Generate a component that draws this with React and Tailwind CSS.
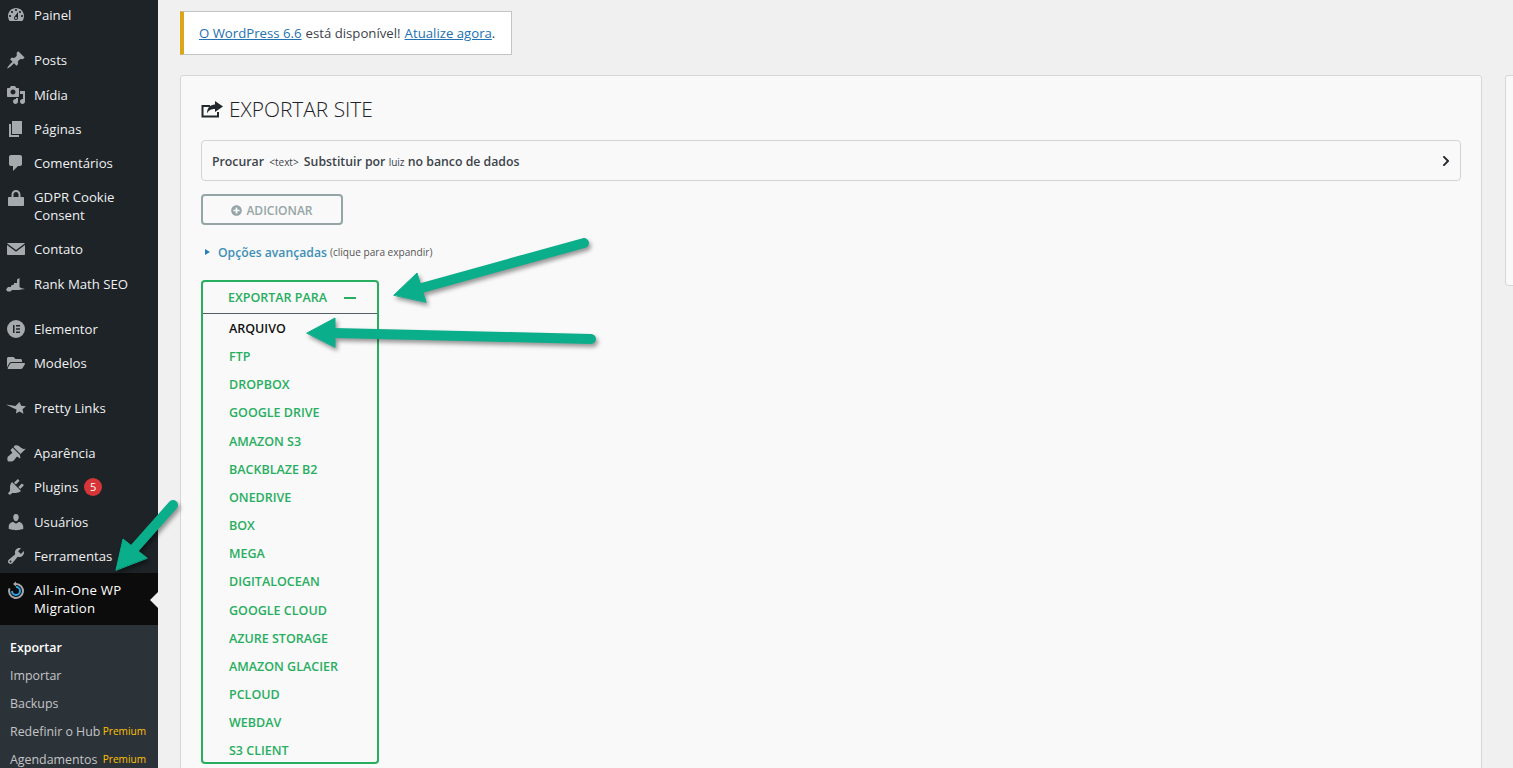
import React from "react";
import { FaFolderOpen, FaPlusCircle, FaChevronRight } from "react-icons/fa";

const Dash = ({ d, evenodd }) => (
  <svg viewBox="0 0 20 20" className="w-5 h-5 fill-[#a7aaad]">
    <path d={d} fillRule={evenodd ? "evenodd" : "nonzero"} />
  </svg>
);

const icons = {
  dashboard: <Dash d="M3.76 16h12.48c1.1-1.37 1.76-3.11 1.76-5 0-4.42-3.58-8-8-8s-8 3.58-8 8c0 1.89.66 3.63 1.76 5zM10 4c.55 0 1 .45 1 1s-.45 1-1 1-1-.45-1-1 .45-1 1-1zM6 6c.55 0 1 .45 1 1s-.45 1-1 1-1-.45-1-1 .45-1 1-1zm8 0c.55 0 1 .45 1 1s-.45 1-1 1-1-.45-1-1 .45-1 1-1zm-5.37 5.55L12 7v6c0 1.1-.9 2-2 2s-2-.9-2-2c0-.57.24-1.08.63-1.45zM4 10c.55 0 1 .45 1 1s-.45 1-1 1-1-.45-1-1 .45-1 1-1zm12 0c.55 0 1 .45 1 1s-.45 1-1 1-1-.45-1-1 .45-1 1-1zm-5 3c0-.55-.45-1-1-1s-1 .45-1 1 .45 1 1 1 1-.45 1-1z" />,
  post: <Dash d="M10.44 3.02l1.82-1.82 6.36 6.35-1.83 1.82c-1.05-.68-2.48-.57-3.41.36l-.75.75c-.92.93-1.04 2.35-.35 3.41l-1.83 1.82-2.41-2.41-2.8 2.79c-.42.42-3.38 2.71-3.8 2.29s1.86-3.39 2.28-3.81l2.79-2.79L4.1 9.36l1.83-1.82c1.05.69 2.48.57 3.4-.36l.75-.75c.93-.92 1.05-2.35.36-3.41z" />,
  media: <Dash d="M13 11V4c0-.55-.45-1-1-1h-1.67L9 1H5L3.67 3H2c-.55 0-1 .45-1 1v7c0 .55.45 1 1 1h10c.55 0 1-.45 1-1zM7 4.5c1.38 0 2.5 1.12 2.5 2.5S8.38 9.5 7 9.5 4.5 8.38 4.5 7 5.62 4.5 7 4.5zM14 6h5v10.5c0 1.38-1.12 2.5-2.5 2.5S14 17.88 14 16.5s1.12-2.5 2.5-2.5c.17 0 .34.02.5.05V9h-3V6zm-4 8.05V13h2v3.5c0 1.38-1.12 2.5-2.5 2.5S7 17.88 7 16.5 8.12 14 9.5 14c.17 0 .34.02.5.05z" />,
  page: <Dash d="M6 15V2h10v13H6zm-1 1h8v2H3V5h2v11z" />,
  comments: <Dash d="M5 2h9c1.1 0 2 .9 2 2v7c0 1.1-.9 2-2 2h-2l-5 5v-5H5c-1.1 0-2-.9-2-2V4c0-1.1.9-2 2-2z" />,
  lock: <Dash d="M14.500 9V6.500C14.500 4 12.500 2 10 2S5.500 4 5.500 6.500V9H3c-.6 0-1 .4-1 1v7c0 .6.4 1 1 1h14c.6 0 1-.4 1-1v-7c0-.6-.4-1-1-1h-2.500zM12.500 9h-5V6.500C7.500 5.100 8.600 4 10 4s2.500 1.100 2.500 2.500V9z" />,
  mail: <Dash d="M2 4h16c.3 0 .6.2.8.4L10 11 1.200 4.400C1.400 4.200 1.700 4 2 4zM1 6l9 6.800L19 6v9c0 .6-.4 1-1 1H2c-.6 0-1-.4-1-1V6z" />,
  rank: <Dash d="M0 15.500l2-2.500h3v-1.500l3-1V9h3V5.500l2.500-1.500v9l1.500 1 4 1-4 .5-2 .5H6l-1.500 1.500h-3z" />,
  elementor: <Dash evenodd d="M10 1a9 9 0 1 0 0 18 9 9 0 0 0 0-18zM7 6h1.500v8H7V6zm3 0h4v1.500h-4V6zm0 3.200h4v1.500h-4V9.200zm0 3.300h4V14h-4v-1.500z" />,
  folder: <FaFolderOpen className="w-[18px] h-[18px] text-[#a7aaad]" />,
  pretty: <Dash d="M0 6.500l9.500 1.500 4-4 1.700 3.800 4.800.5-3.500 3 1 4.500-4-2.300-3.500 2 .5-4L7 10z" />,
  brush: <Dash d="M14.48 11.06L7.41 3.99l1.5-1.5c.5-.56 2.3-.47 3.51.32 1.21.8 1.43 1.28 2.91 2.1 1.18.64 2.45 1.26 4.45.85zm-.71.71L6.7 4.7 4.93 6.47c-.39.39-.39 1.02 0 1.41l1.06 1.06c.39.39.39 1.03 0 1.42-.6.6-1.43 1.11-2.21 1.69-.35.26-.7.53-1.01.84C1.43 13.23.91 15.24 1.76 18.18c2.94.85 4.95.33 6.29-1.01.31-.31.58-.66.84-1.01.58-.78 1.09-1.61 1.69-2.21.39-.39 1.03-.39 1.42 0l1.06 1.06c.39.39 1.02.39 1.41 0z" />,
  plugin: <Dash d="M13.11 4.36L9.87 7.6 8 5.73l3.24-3.24c.35-.34 1.05-.2 1.56.32.52.51.66 1.21.31 1.55zm-8 1.77l.91-1.12 9.01 9.01-1.19.84c-.71.71-2.63 1.16-3.82 1.16H6.14L4.9 17.26c-.59.59-1.54.59-2.12 0-.59-.58-.59-1.53 0-2.12l1.24-1.24v-3.88c0-1.13.4-3.19 1.09-3.89zm7.26 3.97l3.24-3.24c.34-.35 1.04-.21 1.55.31.52.51.66 1.21.31 1.55l-3.24 3.25z" />,
  users: <Dash d="M10 9.25c-2.27 0-2.73-3.44-2.73-3.44C7 4.02 7.82 2 9.97 2c2.16 0 2.98 2.02 2.71 3.81 0 0-.41 3.44-2.68 3.44zm0 2.57L12.72 10c2.39 0 4.52 2.33 4.52 4.53v2.49s-3.65 1.13-7.24 1.13c-3.65 0-7.24-1.13-7.24-1.13v-2.49c0-2.25 1.94-4.48 4.47-4.48z" />,
  tools: <Dash d="M16.68 9.77c-1.34 1.34-3.3 1.67-4.95.99l-5.41 6.52c-.99.99-2.59.99-3.58 0s-.99-2.59 0-3.57l6.52-5.42c-.68-1.65-.35-3.61.99-4.95 1.28-1.28 3.12-1.62 4.72-1.06l-2.89 2.89 2.82 2.82 2.86-2.87c.53 1.58.18 3.39-1.08 4.65zM3.81 16.21c.4.39 1.04.39 1.43 0 .4-.4.4-1.04 0-1.43-.39-.4-1.03-.4-1.43 0-.39.39-.39 1.03 0 1.43z" />,
};

const menu = [
  [{ icon: "dashboard", label: "Painel" }],
  [
    { icon: "post", label: "Posts" },
    { icon: "media", label: "Mídia" },
    { icon: "page", label: "Páginas" },
    { icon: "comments", label: "Comentários" },
    { icon: "lock", label: "GDPR Cookie Consent", tall: true },
    { icon: "mail", label: "Contato" },
    { icon: "rank", label: "Rank Math SEO" },
  ],
  [
    { icon: "elementor", label: "Elementor" },
    { icon: "folder", label: "Modelos" },
  ],
  [{ icon: "pretty", label: "Pretty Links" }],
  [
    { icon: "brush", label: "Aparência" },
    { icon: "plugin", label: "Plugins", badge: 5 },
    { icon: "users", label: "Usuários" },
    { icon: "tools", label: "Ferramentas" },
  ],
];

const submenu = [
  { label: "Exportar", current: true },
  { label: "Importar" },
  { label: "Backups" },
  { label: "Redefinir o Hub", premium: true },
  { label: "Agendamentos", premium: true },
];

const exportTargets = [
  "FTP",
  "DROPBOX",
  "GOOGLE DRIVE",
  "AMAZON S3",
  "BACKBLAZE B2",
  "ONEDRIVE",
  "BOX",
  "MEGA",
  "DIGITALOCEAN",
  "GOOGLE CLOUD",
  "AZURE STORAGE",
  "AMAZON GLACIER",
  "PCLOUD",
  "WEBDAV",
  "S3 CLIENT",
];

const MenuItem = ({ item }) => (
  <div className={`flex ${item.tall ? "h-[51.8px] pt-[8px]" : "h-[34.3px] items-center"} text-[#f0f0f1]`}>
    <div className="w-[32px] mr-[2px] flex justify-center shrink-0">{icons[item.icon]}</div>
    <div className={`leading-[18px] ${item.tall ? "w-[110px]" : ""}`}>{item.label}</div>
    {item.badge && (
      <span className="ml-[6px] w-[18px] h-[18px] rounded-full bg-[#d63638] text-white text-[11px] flex items-center justify-center">
        {item.badge}
      </span>
    )}
  </div>
);

const Sidebar = () => (
  <aside className="w-[158px] shrink-0 h-full bg-[#1d2327] text-[13.2px] flex flex-col overflow-hidden">
    <div className="flex flex-col gap-[10.75px] -mt-[1.900px]">
      {menu.map((group, i) => (
        <div key={i}>
          {group.map((item) => (
            <MenuItem key={item.label} item={item} />
          ))}
        </div>
      ))}
    </div>
    <div className="relative h-[52px] bg-[#0c0c0c] text-white flex shrink-0 pt-[8px]">
      <div className="w-[32px] mr-[2px] flex justify-center shrink-0">
        <svg viewBox="0 0 20 20" className="w-5 h-5 fill-none">
          <path d="M10 3a7 7 0 1 1-6.500 4.400" stroke="#a7aaad" strokeWidth="2" />
          <path d="M10 .5l-3 2.600 3 2.400z" fill="#a7aaad" />
          <path d="M10 6a4 4 0 1 1-4 4" stroke="#2ea2e0" strokeWidth="2" />
        </svg>
      </div>
      <div className="leading-[18px] w-[110px] tracking-[0.25px]">All-in-One WP Migration</div>
      <span className="absolute right-0 top-[19px] border-y-[8px] border-y-transparent border-r-[8px] border-r-[#f0f0f1]" />
    </div>
    <div className="flex-1 bg-[#2c3338] pt-[9px] text-[12.4px] text-[#c3c4c7]">
      {submenu.map((s) => (
        <div
          key={s.label}
          className={`h-[28px] pl-[10px] flex items-center whitespace-nowrap ${s.current ? "text-white font-semibold" : ""}`}
        >
          <span>{s.label}</span>
          {s.premium && <span className="ml-auto pr-[12px] text-[10.100px] text-[#ffc107]">Premium</span>}
        </div>
      ))}
    </div>
  </aside>
);

const ExportDropdown = () => (
  <div className="w-[178px] h-[484px] mt-[18px] border-2 border-[#27ae60] rounded-[4px] text-[#27ae60] text-[12.500px] font-semibold overflow-hidden">
    <div className="h-[32px] pt-[2px] border-b border-[#555d66] flex items-center pl-[25px]">
      <span>EXPORTAR PARA</span>
      <span className="ml-[17px] -mt-[1px] w-[12px] h-[2px] bg-[#27ae60]" />
    </div>
    <div className="pl-[26px] pt-[1.300px]">
      <div className="h-[28.160px] flex items-center text-[#111]">ARQUIVO</div>
      {exportTargets.map((t) => (
        <div key={t} className="h-[28.160px] flex items-center">
          {t}
        </div>
      ))}
    </div>
  </div>
);

// setas verdes desenhadas por cima da página
const Arrows = () => (
  <svg className="absolute inset-0 w-[1513px] h-[768px] pointer-events-none drop-shadow-[2px_3px_2px_rgba(0,0,0,0.4)]" viewBox="0 0 1513 768">
    <g fill="#0bae8a" stroke="#0bae8a" strokeLinecap="round" strokeLinejoin="round">
      <path d="M584 243L418 289" strokeWidth="10" fill="none" />
      <path d="M394 295L417 273L426 302Z" strokeWidth="1" />
      <path d="M591 339L334 333" strokeWidth="10" fill="none" />
      <path d="M307 333L335 318L335 347Z" strokeWidth="1" />
      <path d="M173 505L134 549" strokeWidth="10" fill="none" />
      <path d="M116 570L123 539L147 558Z" strokeWidth="1" />
    </g>
  </svg>
);

export default function App() {
  return (
    <div className="relative w-[1513px] h-[768px] overflow-hidden flex bg-[#f0f0f1] font-['Open_Sans',sans-serif] text-[#3c434a]">
      <Sidebar />
      <main className="flex-1 min-w-0 pl-[22px] pt-[11px]">
        <div className="w-[332px] h-[44px] pt-[2px] bg-white border border-[#c3c4c7] border-l-4 border-l-[#dba617] flex items-center pl-[15px] text-[13.200px] whitespace-nowrap">
          <span className="text-[#2271b1] underline">O WordPress 6.6</span>
          <span className="ml-[4px]">está disponível!</span>
          <span className="ml-[4px] text-[#2271b1] underline">Atualize agora</span>
          <span>.</span>
        </div>
        <div className="flex gap-[23px] mt-[20px] items-start">
          <section className="w-[1302px] h-[700px] shrink-0 bg-[#f9f9f9] border border-[#d6d6d6] rounded-[3px] pl-[20px] pr-[20px] pt-[18px]">
            <h1 className="flex items-center h-[30px] text-[20.900px] font-light text-[#1d2327] leading-none">
              <svg viewBox="0 0 22 17" className="w-[22px] h-[17px] mr-[6px] shrink-0">
                <path d="M9 5H1.500V15.500H17V11" fill="none" stroke="#23282d" strokeWidth="2" />
                <path d="M14 0L22 5.500L14 11V8C10 8 8 9 6 12.500C6 7 9 3.500 14 3.500Z" fill="#23282d" />
              </svg>
              EXPORTAR SITE
            </h1>
            <div className="mt-[16px] h-[41px] border border-[#d4d4d4] rounded-[4px] flex items-center justify-between pl-[10px] pr-[8px] pt-[4px] text-[12.300px] font-semibold text-[#3c434a]">
              <div className="whitespace-nowrap">
                Procurar <span className="font-normal text-[10px] mx-[2px]">&lt;text&gt;</span> Substituir por{" "}
                <span className="font-normal text-[10px]">luiz</span> no banco de dados
              </div>
              <FaChevronRight className="w-[12px] h-[12px] -mt-[3px] text-[#23282d]" />
            </div>
            <button className="mt-[13px] w-[142px] h-[31px] pt-[2px] border-2 border-[#95a5a6] rounded-[4px] flex items-center justify-center gap-[4px] text-[12px] font-semibold text-[#95a5a6]">
              <FaPlusCircle className="w-[11px] h-[11px] -mt-[1px]" />
              ADICIONAR
            </button>
            <div className="mt-[19px] h-[18px] flex items-center whitespace-nowrap">
              <span className="ml-[4px] mr-[8px] -mt-[2px] border-y-[3px] border-y-transparent border-l-[5px] border-l-[#2980b9]" />
              <span className="text-[12.200px] font-semibold text-[#3d8fb8]">Opções avançadas</span>
              <span className="ml-[3px] text-[10.100px] text-[#555]">(clique para expandir)</span>
            </div>
            <ExportDropdown />
          </section>
          <aside className="w-[40px] h-[211px] shrink-0 bg-[#f9f9f9] border border-[#d6d6d6] rounded-[3px]" />
        </div>
      </main>
      <Arrows />
    </div>
  );
}
